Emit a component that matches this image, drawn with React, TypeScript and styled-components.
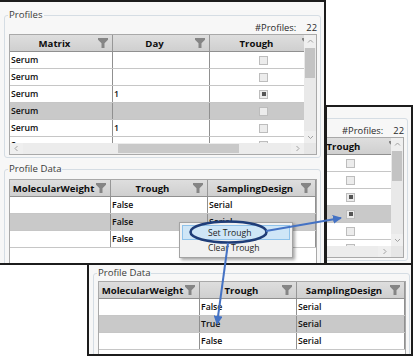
import React from 'react';
import styled, { createGlobalStyle } from 'styled-components';

const GlobalStyle = createGlobalStyle`
  html, body {
    margin: 0;
    padding: 0;
    background: #fff;
  }
  body {
    font-family: "Open Sans", "Noto Sans", sans-serif;
    color: #111;
  }
`;

const Canvas = styled.div`
  position: relative;
  width: 414px;
  height: 356px;
  overflow: hidden;
  background: #fff;
`;

// the three screenshots sit on a free canvas
const MainShot = styled.div`
  position: absolute;
  left: 0;
  top: 0;
  width: 326px;
  height: 265px;
  box-sizing: border-box;
  border: 2px solid #1c1c1c;
  border-left: none;
  background: #f7f7f7;
  padding: 6px 3px 0 4px;
  overflow: hidden;
  display: flex;
  flex-direction: column;
  gap: 4px;
`;

const SideShot = styled.div`
  position: absolute;
  left: 325px;
  top: 105px;
  width: 88px;
  height: 162px;
  box-sizing: border-box;
  border: 2px solid #1c1c1c;
  background: #f7f7f7;
  padding: 4px 3px 0 0;
  overflow: hidden;
  display: flex;
  justify-content: flex-end;
  align-items: flex-start;
`;

const BottomShot = styled.div`
  position: absolute;
  left: 87px;
  top: 263px;
  width: 326px;
  height: 93px;
  box-sizing: border-box;
  border: 2px solid #1c1c1c;
  background: #f7f7f7;
  padding: 1px 3px 0 4px;
  overflow: hidden;
  display: flex;
  flex-direction: column;
`;

const Group = styled.fieldset`
  margin: 0;
  width: 317px;
  flex-shrink: 0;
  box-sizing: border-box;
  min-width: 0;
  padding: 0 3px 2px 4px;
  border: 1px solid #d5dde4;
  border-radius: 3px;
`;

const Legend = styled.legend`
  padding: 0 1px;
  margin-left: -1px;
  font-size: 9.6px;
  line-height: 14px;
  color: #3a3a3a;
`;

const CountRow = styled.div`
  height: 12px;
  display: flex;
  justify-content: flex-end;
  align-items: center;
  font-size: 9.4px;
  line-height: 12px;
  color: #2a2a2a;
`;

const CountValue = styled.span`
  margin-left: 10px;
`;

const Grid = styled.div<{ $height: number; $top?: number }>`
  height: ${p => p.$height}px;
  margin-top: ${p => p.$top ?? 0}px;
  box-sizing: border-box;
  border: 1px solid #a9a9a9;
  background: #fff;
  display: flex;
  flex-direction: column;
  overflow: hidden;
`;

const GridTop = styled.div`
  flex: 1;
  display: flex;
  min-height: 0;
`;

const TableArea = styled.div`
  flex: 1;
  min-width: 0;
  overflow: hidden;
`;

const HeaderRow = styled.div`
  display: flex;
  height: 17px;
  box-sizing: border-box;
  border-bottom: 1px solid #909090;
  background: linear-gradient(#dedede, #cfcfcf);
`;

const HeaderCell = styled.div<{ $w?: number }>`
  ${p => (p.$w ? `width: ${p.$w}px; flex-shrink: 0;` : 'flex: 1; min-width: 0;')}
  box-sizing: border-box;
  display: flex;
  align-items: center;
  padding-left: 1px;
  border-right: 1px solid #979797;
  font-size: 9.6px;
  font-weight: 700;
  color: #0e0e0e;
  white-space: nowrap;
  overflow: hidden;
`;

const HeaderLabel = styled.span`
  flex: 1;
  min-width: 0;
  text-align: center;
`;

const FunnelIcon = styled.svg`
  flex-shrink: 0;
  margin: 0 4px 0 0;
`;

const Row = styled.div<{ $selected?: boolean }>`
  display: flex;
  height: 17px;
  box-sizing: border-box;
  border-bottom: 1px solid #c6c6c6;
  background: ${p => (p.$selected ? '#c9c9c9' : '#fff')};
`;

const Cell = styled.div<{ $w?: number; $center?: boolean }>`
  ${p => (p.$w ? `width: ${p.$w}px; flex-shrink: 0;` : 'flex: 1; min-width: 0;')}
  box-sizing: border-box;
  display: flex;
  align-items: center;
  justify-content: ${p => (p.$center ? 'center' : 'flex-start')};
  padding-left: 1px;
  border-right: 1px solid #909090;
  font-size: 8.7px;
  font-weight: 600;
  color: #0e0e0e;
  white-space: nowrap;
  overflow: hidden;
`;

const Check = styled.div<{ $on: boolean }>`
  width: 9px;
  height: 9px;
  box-sizing: border-box;
  border: 1px solid #bdbdbd;
  background: #ececec;
  display: flex;
  align-items: center;
  justify-content: center;
  &::after {
    content: '';
    width: 4px;
    height: 4px;
    background: ${p => (p.$on ? '#555' : 'transparent')};
  }
`;

const VScroll = styled.div`
  width: 12px;
  flex-shrink: 0;
  background: #e9e9e9;
  display: flex;
  flex-direction: column;
  align-items: stretch;
`;

const ArrowBox = styled.div<{ $size: number }>`
  flex: 0 0 ${p => p.$size}px;
  display: flex;
  align-items: center;
  justify-content: center;
  background: #efefef;
`;

const VThumb = styled.div<{ $size: number }>`
  flex: 0 0 ${p => p.$size}px;
  margin: 0 1px;
  background: #c3c3c3;
`;

const Spacer = styled.div<{ $size?: number }>`
  ${p => (p.$size !== undefined ? `flex: 0 0 ${p.$size}px;` : 'flex: 1;')}
`;

const GridBottom = styled.div`
  height: 11px;
  display: flex;
  flex-shrink: 0;
`;

const HScroll = styled.div`
  flex: 1;
  display: flex;
  background: #ececec;
`;

const HThumb = styled.div<{ $size: number }>`
  flex: 0 0 ${p => p.$size}px;
  margin: 1px 0;
  background: #c9c9c9;
`;

const Corner = styled.div`
  width: 12px;
  background: #e6e6e6;
`;

const Menu = styled.div`
  position: absolute;
  left: 179px;
  top: 222px;
  width: 114px;
  box-sizing: border-box;
  padding: 2px;
  background: #f1f1f1;
  border: 1px solid #a3a3a3;
  box-shadow: 2px 2px 3px rgba(0, 0, 0, 0.35);
  display: flex;
  flex-direction: column;
`;

const MenuItem = styled.div<{ $hot?: boolean }>`
  height: 15px;
  box-sizing: border-box;
  padding-left: 25px;
  display: flex;
  align-items: center;
  font-size: 8.6px;
  color: #1e1e1e;
  border: 1px solid ${p => (p.$hot ? '#8fc2ea' : 'transparent')};
  background: ${p => (p.$hot ? '#cfe6f7' : 'transparent')};
`;

const Overlay = styled.svg`
  position: absolute;
  left: 0;
  top: 0;
  pointer-events: none;
`;

const Funnel = () => (
  <FunnelIcon viewBox="0 0 10 10" width="10" height="10">
    <path d="M0 0H10V1.8L6.5 5.2V10H3.5V5.2L0 1.8Z" fill="#858585" />
  </FunnelIcon>
);

const chevrons: Record<string, string> = {
  up: 'M1 4.5L3.5 2L6 4.5',
  down: 'M1 2L3.5 4.5L6 2',
  left: 'M4.5 1L2 3.5L4.5 6',
  right: 'M2.5 1L5 3.5L2.5 6',
};

const Chevron = ({ dir }: { dir: string }) => (
  <svg width="7" height="7" viewBox="0 0 7 7">
    <path d={chevrons[dir]} fill="none" stroke="#a2a2a2" strokeWidth="1" />
  </svg>
);

type Col = { title: string; width?: number };

const profileCols: Col[] = [
  { title: 'Matrix', width: 103 },
  { title: 'Day', width: 97 },
  { title: 'Trough', width: 107 },
];

const dataCols: Col[] = [
  { title: 'MolecularWeight', width: 101 },
  { title: 'Trough', width: 97 },
  { title: 'SamplingDesign' },
];

const profileRows = [
  { matrix: 'Serum', day: '' },
  { matrix: 'Serum', day: '' },
  { matrix: 'Serum', day: '1' },
  { matrix: 'Serum', day: '', selected: true },
  { matrix: 'Serum', day: '1' },
  { matrix: 'Serum', day: '' },
];

const Header = ({ cols }: { cols: Col[] }) => (
  <HeaderRow>
    {cols.map(c => (
      <HeaderCell key={c.title} $w={c.width}>
        <HeaderLabel>{c.title}</HeaderLabel>
        <Funnel />
      </HeaderCell>
    ))}
  </HeaderRow>
);

const ProfilesGroup = ({ checks }: { checks: boolean[] }) => (
  <Group>
    <Legend>Profiles</Legend>
    <CountRow>
      #Profiles:<CountValue>22</CountValue>
    </CountRow>
    <Grid $height={121}>
      <GridTop>
        <TableArea>
          <Header cols={profileCols} />
          {profileRows.map((r, i) => (
            <Row key={i} $selected={r.selected}>
              <Cell $w={103}>{r.matrix}</Cell>
              <Cell $w={97}>{r.day}</Cell>
              <Cell $w={107} $center>
                <Check $on={checks[i]} />
              </Cell>
            </Row>
          ))}
        </TableArea>
        <VScroll>
          <ArrowBox $size={13}>
            <Chevron dir="up" />
          </ArrowBox>
          <VThumb $size={30} />
          <Spacer />
          <ArrowBox $size={12}>
            <Chevron dir="down" />
          </ArrowBox>
        </VScroll>
      </GridTop>
      <GridBottom>
        <HScroll>
          <ArrowBox $size={13}>
            <Chevron dir="left" />
          </ArrowBox>
          <Spacer $size={95} />
          <HThumb $size={121} />
          <Spacer />
          <ArrowBox $size={13}>
            <Chevron dir="right" />
          </ArrowBox>
        </HScroll>
        <Corner />
      </GridBottom>
    </Grid>
  </Group>
);

const ProfileDataGroup = ({ troughs, gridTop }: { troughs: string[]; gridTop: number }) => (
  <Group>
    <Legend>Profile Data</Legend>
    <Grid $height={92} $top={gridTop}>
      <TableArea>
        <Header cols={dataCols} />
        {troughs.map((t, i) => (
          <Row key={i} $selected={i === 1}>
            <Cell $w={101} />
            <Cell $w={97}>{t}</Cell>
            <Cell>Serial</Cell>
          </Row>
        ))}
      </TableArea>
    </Grid>
  </Group>
);

export default function App() {
  return (
    <>
      <GlobalStyle />
      <Canvas>
        <MainShot>
          <ProfilesGroup checks={[false, false, true, false, false, false]} />
          <ProfileDataGroup troughs={['False', 'False', 'False']} gridTop={3} />
        </MainShot>

        <SideShot>
          <ProfilesGroup checks={[false, false, true, true, false, false]} />
        </SideShot>

        <BottomShot>
          <ProfileDataGroup troughs={['False', 'True', 'False']} gridTop={1} />
        </BottomShot>

        <Menu>
          <MenuItem $hot>Set Trough</MenuItem>
          <MenuItem>Clear Trough</MenuItem>
        </Menu>

        <Overlay width="414" height="356" viewBox="0 0 414 356">
          <defs>
            <marker
              id="head"
              viewBox="0 0 10 10"
              refX="9"
              refY="5"
              markerWidth="9"
              markerHeight="9"
              markerUnits="userSpaceOnUse"
              orient="auto"
            >
              <path d="M0 0L10 5L0 10Z" fill="#4472c4" />
            </marker>
          </defs>
          <ellipse cx="228.5" cy="232" rx="38" ry="10.5" fill="none" stroke="#1f3d78" strokeWidth="2.6" />
          <line x1="266" y1="231" x2="341" y2="218" stroke="#4472c4" strokeWidth="2" markerEnd="url(#head)" />
          <line x1="228" y1="243" x2="217" y2="324" stroke="#4472c4" strokeWidth="2" markerEnd="url(#head)" />
        </Overlay>
      </Canvas>
    </>
  );
}
